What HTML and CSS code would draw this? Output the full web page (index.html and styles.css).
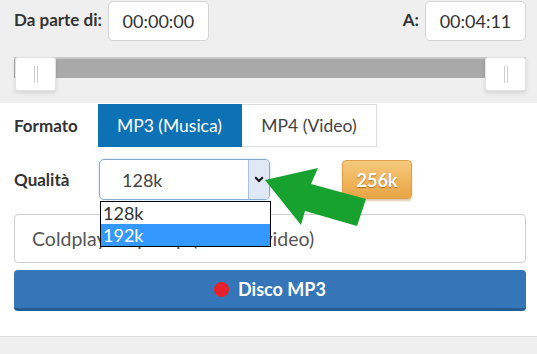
FILE: index.html
```html
<!DOCTYPE html>
<html lang="it">
<head>
<meta charset="utf-8">
<title>Convertitore</title>
<link rel="stylesheet" href="styles.css">
</head>
<body>
<div class="page">
  <section class="top">
    <div class="range-row">
      <span class="lbl">Da parte di:</span>
      <div class="time">00:00:00</div>
      <div class="spacer"></div>
      <span class="lbl">A:</span>
      <div class="time">00:04:11</div>
    </div>
    <div class="slider">
      <div class="track"></div>
      <div class="handle h-left"><i></i><i></i></div>
      <div class="handle h-right"><i></i><i></i></div>
    </div>
  </section>

  <section class="panel">
    <div class="row fmt">
      <span class="lbl">Formato</span>
      <div class="tabs">
        <span class="tab active">MP3 (Musica)</span>
        <span class="tab">MP4 (Video)</span>
      </div>
    </div>
    <div class="row qual">
      <span class="lbl">Qualità</span>
      <div class="select">
        <span class="val">128k</span>
        <span class="caret">
          <svg width="10" height="7" viewBox="0 0 10 7"><path d="M1.2 1.2 L5 5 L8.8 1.2" fill="none" stroke="#111" stroke-width="2"/></svg>
        </span>
        <ul class="list">
          <li>128k</li>
          <li class="sel">192k</li>
        </ul>
      </div>
      <span class="badge">256k</span>
    </div>
    <div class="title">Coldplay - Up&amp;Up (Official video)</div>
    <button class="rec"><span class="dot"></span>Disco MP3</button>
  </section>
  <div class="foot"></div>

  <svg class="arrow" width="537" height="354" viewBox="0 0 537 354">
    <polygon points="265,180 318,168 311,184 366,199 357,226 305,211 301,225" fill="#17a22f"/>
  </svg>
</div>
</body>
</html>
```

FILE: styles.css
```css
* { box-sizing: border-box; }
html, body { margin: 0; padding: 0; }
body {
  background: #efefef;
  font-family: Lato, "Open Sans", "Liberation Sans", sans-serif;
  color: #333;
  width: 537px;
  height: 354px;
  overflow: hidden;
}
.page { position: relative; width: 537px; height: 354px; }

.top { padding: 1px 11px 12px 14px; }
.range-row { display: flex; align-items: center; height: 40px; }
.lbl { font-weight: 700; font-size: 17px; color: #333; }
.range-row .lbl { margin-right: 6px; align-self: flex-start; margin-top: 8px; }
.time {
  width: 101px; height: 40px;
  background: #fff;
  border: 1px solid #d4d4d4;
  border-radius: 5px;
  font-size: 18px;
  color: #333;
  display: flex; align-items: center; justify-content: center;
}
.spacer { flex: 1; }

.slider { position: relative; height: 34px; margin-top: 16px; }
.track {
  margin-top: 6px;
  height: 21px;
  background: #a9a9a9;
  border-top: 2px solid #c9c9c9;
}
.handle {
  position: absolute; top: 0;
  width: 41px; height: 34px;
  background: #fff;
  border: 1px solid #e3e3e3;
  border-radius: 3px;
  box-shadow: 0 2px 4px rgba(0,0,0,0.12);
  display: flex; justify-content: center; gap: 2px;
  padding-top: 8px;
}
.handle i { display: block; width: 1px; height: 17px; background: #ccc; }
.h-left { left: 1px; }
.h-right { right: 0; }

.panel {
  background: #fff;
  padding: 1px 11px 25px 14px;
  border-bottom: 1px solid #dcdcdc;
}
.row { display: flex; align-items: center; }
.row .lbl { width: 84px; }
.tabs { display: flex; }
.tab {
  height: 43px;
  display: flex; align-items: center; justify-content: center;
  font-size: 17.5px;
  color: #444;
  border: 1px solid #ddd;
  border-left: none;
}
.tab.active {
  width: 144px;
  background: #0d72b5;
  border-color: #0d72b5;
  color: #fff;
}
.tab:not(.active) { width: 135px; }

.qual { margin-top: 12px; }
.qual .lbl { width: 85px; }
.select {
  position: relative;
  width: 171px; height: 41px;
  border: 1px solid #86a9d3;
  border-radius: 5px;
  background: #fff;
  display: flex; align-items: stretch;
  box-shadow: 0 0 3px rgba(100,150,210,0.35);
}
.val { flex: 1; padding-left: 22px; font-size: 18px; color: #444; display: flex; align-items: center; }
.caret {
  width: 21px;
  background: #dfe9f6;
  border-left: 1px solid #a8c0dd;
  border-radius: 0 4px 4px 0;
  display: flex; align-items: center; justify-content: center;
}
.list {
  position: absolute; left: 0; top: 41px;
  width: 171px; margin: 0; padding: 0;
  list-style: none;
  background: #fff;
  border: 1px solid #000;
  z-index: 2;
}
.list li { height: 22px; line-height: 22px; font-size: 18px; padding-left: 2px; color: #333; }
.list li.sel { background: #3399ff; color: #fff; }

.badge {
  margin-left: 72px;
  width: 70px; height: 39px;
  display: flex; align-items: center; justify-content: center;
  background: linear-gradient(#f6c97c, #e8a444);
  border: 1px solid #dda04a;
  border-radius: 4px;
  box-shadow: 0 2px 2px rgba(160,100,20,0.35);
  color: #fff;
  font-weight: 700;
  font-size: 18px;
  text-shadow: 0 1px 1px rgba(120,70,0,0.6);
}

.title {
  margin-top: 14px;
  height: 49px;
  border: 1px solid #cfcfcf;
  border-radius: 4px;
  padding-left: 17px;
  display: flex; align-items: center;
  font-size: 19.5px;
  color: #555;
  white-space: nowrap; overflow: hidden;
}
.rec {
  margin-top: 7px;
  width: 512px; height: 41px;
  background: #3476b8;
  border: none;
  border-bottom: 3px solid #245b90;
  border-radius: 4px;
  color: #fff;
  font-family: inherit;
  font-weight: 700;
  font-size: 18px;
  display: flex; align-items: center; justify-content: center;
  gap: 9px;
  padding: 0;
}
.dot { width: 15px; height: 15px; border-radius: 50%; background: #e8202b; }

.foot { height: 30px; }
.arrow { position: absolute; left: 0; top: 0; pointer-events: none; z-index: 3; }
```
